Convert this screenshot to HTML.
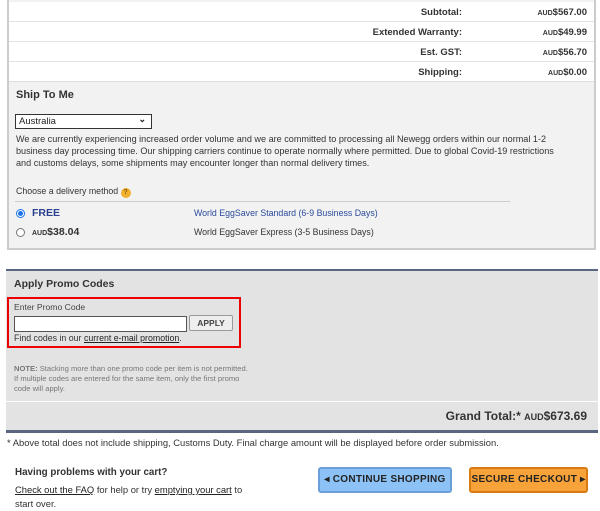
<!DOCTYPE html>
<html><head><meta charset="utf-8"><style>
*{box-sizing:border-box;margin:0;padding:0}
body{width:600px;height:511px;background:#fff;font-family:"Liberation Sans",sans-serif;color:#222;position:relative;overflow:hidden;font-size:9px}
.abs{position:absolute}
.top{left:7px;top:-2px;width:589px;height:252px;border:2px solid #ccc;background:#f2f2f2}
.row{position:absolute;left:0;width:585px;height:20px;background:#fff;border-bottom:1px solid #e3e3e3}
.row .l{position:absolute;right:132px;top:5px;font-weight:bold;font-size:9.5px;color:#333}
.row .v{position:absolute;right:7px;top:5px;font-weight:bold;font-size:9.5px;color:#333}
small{font-size:7px}
.promo{left:6px;top:269px;width:592px;height:164px;background:#e3e3e3;border-top:2px solid #5a6580;border-bottom:3px solid #5a6580}
a{color:#222;text-decoration:underline}
.btn{position:absolute;height:26px;border-radius:3px;font-weight:bold;font-size:10px;text-align:center;line-height:22px;letter-spacing:.3px}
</style></head><body>
<div class="abs top">
 <div class="row" style="top:2px"><span class="l">Subtotal:</span><span class="v"><small>AUD</small>$567.00</span></div>
 <div class="row" style="top:22px"><span class="l">Extended Warranty:</span><span class="v"><small>AUD</small>$49.99</span></div>
 <div class="row" style="top:42px"><span class="l">Est. GST:</span><span class="v"><small>AUD</small>$56.70</span></div>
 <div class="row" style="top:62px;border-bottom:1px solid #ddd"><span class="l">Shipping:</span><span class="v"><small>AUD</small>$0.00</span></div>
</div>
<div class="abs" style="left:16px;top:89px;font-weight:bold;font-size:11px;color:#333">Ship To Me</div>
<div class="abs" style="left:15px;top:114px;width:137px;height:15px;border:1px solid #333;background:#fff;font-size:9.5px;padding:1px 3px">Australia<span style="position:absolute;right:5px;top:-1px;font-size:9px;font-weight:bold">&#8964;</span></div>
<div class="abs" style="left:16px;top:133px;font-size:9.1px;line-height:12px;color:#333;white-space:nowrap">We are currently experiencing increased order volume and we are committed to processing all Newegg orders within our normal 1-2<br>business day processing time. Our shipping carriers continue to operate normally where permitted. Due to global Covid-19 restrictions<br>and customs delays, some shipments may encounter longer than normal delivery times.</div>
<div class="abs" style="left:16px;top:186px;font-size:8.8px;color:#333">Choose a delivery method <span style="display:inline-block;width:10px;height:10px;border-radius:50%;background:#f0b030;color:#8a5a00;font-size:7px;text-align:center;line-height:10px;font-weight:bold">?</span></div>
<div class="abs" style="left:15px;top:201px;width:495px;border-top:1px solid #ccc"></div>
<div class="abs" style="left:16px;top:209px;width:9px;height:9px;border-radius:50%;border:1px solid #1a73e8;background:#fff"><div style="margin:1px;width:5px;height:5px;border-radius:50%;background:#1a73e8"></div></div>
<div class="abs" style="left:32px;top:207px;font-weight:bold;font-size:10.5px;color:#2a3f8f">FREE</div>
<div class="abs" style="left:194px;top:208px;font-size:8.8px;color:#2a4a9a">World EggSaver Standard (6-9 Business Days)</div>
<div class="abs" style="left:16px;top:228px;width:9px;height:9px;border-radius:50%;border:1px solid #777;background:#fff"></div>
<div class="abs" style="left:32px;top:226px;font-weight:bold;font-size:10.5px;color:#333"><small>AUD</small>$38.04</div>
<div class="abs" style="left:194px;top:227px;font-size:8.8px;color:#333">World EggSaver Express (3-5 Business Days)</div>

<div class="abs promo"></div>
<div class="abs" style="left:14px;top:278px;font-weight:bold;font-size:10.5px;color:#333">Apply Promo Codes</div>
<div class="abs" style="left:7px;top:297px;width:234px;height:51px;border:2px solid #e00"></div>
<div class="abs" style="left:14px;top:302px;font-size:8.6px;color:#444">Enter Promo Code</div>
<div class="abs" style="left:14px;top:316px;width:173px;height:16px;border:1px solid #555;background:#fff"></div>
<div class="abs" style="left:189px;top:315px;width:44px;height:16px;border:1px solid #999;border-radius:2px;background:#eee;font-weight:bold;font-size:8.5px;text-align:center;line-height:14px;color:#444">APPLY</div>
<div class="abs" style="left:14px;top:333px;font-size:8.8px;color:#333">Find codes in our <a>current e-mail promotion</a>.</div>
<div class="abs" style="left:14px;top:364px;width:235px;font-size:7.6px;line-height:10px;color:#777"><b>NOTE:</b> Stacking more than one promo code per item is not permitted. If multiple codes are entered for the same item, only the first promo code will apply.</div>
<div class="abs" style="left:6px;top:401px;width:592px;border-top:1px solid #fff"></div>
<div class="abs" style="right:13px;top:409px;font-weight:bold;font-size:12px;color:#333">Grand Total:* <small style="font-size:9px">AUD</small>$673.69</div>
<div class="abs" style="left:7px;top:437px;font-size:9.4px;color:#333">* Above total does not include shipping, Customs Duty. Final charge amount will be displayed before order submission.</div>
<div class="abs" style="left:15px;top:467px;font-weight:bold;font-size:9.8px;color:#333">Having problems with your cart?</div>
<div class="abs" style="left:15px;top:483px;font-size:9.4px;line-height:14px;color:#333;white-space:nowrap"><a>Check out the FAQ</a> for help or try <a>emptying your cart</a> to<br>start over.</div>
<div class="btn" style="left:318px;top:467px;width:134px;background:#8dc2f7;border:2px solid #6a9ed8;color:#222">&#9666; CONTINUE SHOPPING</div>
<div class="btn" style="left:469px;top:467px;width:119px;background:#f7a33a;border:2px solid #d97b10;color:#222">SECURE CHECKOUT &#9656;</div>
</body></html>
